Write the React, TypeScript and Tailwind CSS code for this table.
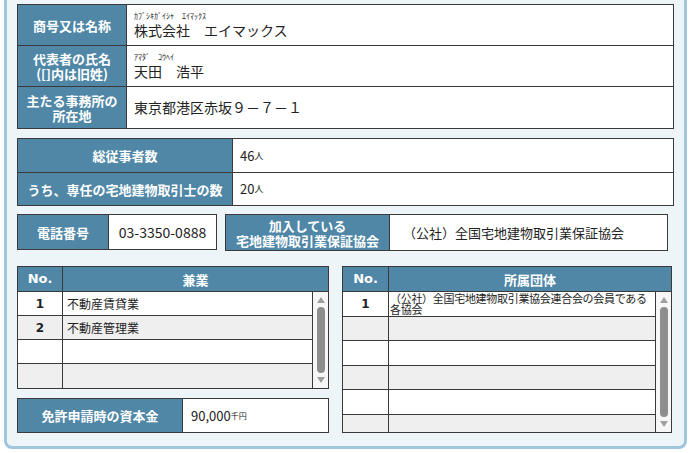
const jp = { fontFamily: '"Noto Sans CJK JP", "Noto Sans", sans-serif' };
const vd = { fontFamily: '"DejaVu Sans", "Noto Sans CJK JP", sans-serif' };

function Scrollbar() {
  return (
    <div className="flex w-[15px] shrink-0 flex-col items-center bg-[#f7f7f7] py-[5px]">
      <div className="h-0 w-0 border-x-[4px] border-b-[6px] border-x-transparent border-b-[#a0a0a0]" />
      <div className="my-[4px] w-[8px] flex-1 rounded-full bg-[#8e8e8e]" />
      <div className="h-0 w-0 border-x-[4px] border-t-[6px] border-x-transparent border-t-[#a0a0a0]" />
    </div>
  );
}

function Label({ children, className = '' }: { children: React.ReactNode; className?: string }) {
  return (
    <div
      className={`flex shrink-0 flex-col items-center justify-center bg-[#5087a7] text-center text-[13px] font-bold leading-[15px] text-white ${className}`}
      style={jp}
    >
      {children}
    </div>
  );
}

export default function App() {
  const sideJobs = ['不動産賃貸業', '不動産管理業', '', ''];
  const groups: string[][] = [['（公社）全国宅地建物取引業協会連合会の会員である', '各協会'], [], [], [], [], []];

  return (
    <div className="h-[453px] w-[690px] overflow-hidden bg-white" style={jp}>
      <div className="ml-[4px] h-[449px] w-[683px] rounded-b-[8px] border-x-[3px] border-b-[3px] border-[#9fc6dd] bg-[#eef5f8] px-[10px] pt-[4px] text-[#222]">
        {/* 商号 */}
        <div className="flex w-[657px] flex-col border border-[#3a3a3a] bg-white">
          <div className="flex h-[41px] border-b border-[#3a3a3a]">
            <Label className="w-[109px] border-r border-[#3a3a3a]">商号又は名称</Label>
            <div className="flex flex-col justify-center pl-[7px]">
              <span className="text-[8px] leading-[10px]">ｶﾌﾞｼｷｶﾞｲｼｬ　ｴｲﾏｯｸｽ</span>
              <span className="text-[14px] leading-[18px]">株式会社　エイマックス</span>
            </div>
          </div>
          <div className="flex h-[41px] border-b border-[#3a3a3a]">
            <Label className="w-[109px] border-r border-[#3a3a3a]">
              <span>代表者の氏名</span>
              <span>([]内は旧姓)</span>
            </Label>
            <div className="flex flex-col justify-center pl-[7px]">
              <span className="text-[8px] leading-[10px]">ｱﾏﾀﾞ　ｺｳﾍｲ</span>
              <span className="text-[14px] leading-[18px]">天田　浩平</span>
            </div>
          </div>
          <div className="flex h-[41px]">
            <Label className="w-[109px] border-r border-[#3a3a3a]">
              <span>主たる事務所の</span>
              <span>所在地</span>
            </Label>
            <div className="flex items-center pl-[7px] text-[14px]">東京都港区赤坂９－７－１</div>
          </div>
        </div>

        {/* 従事者数 */}
        <div className="mt-[9px] flex w-[657px] flex-col border border-[#3a3a3a] bg-white">
          <div className="flex h-[34px] border-b border-[#3a3a3a]">
            <Label className="w-[215px] border-r border-[#3a3a3a]">総従事者数</Label>
            <div className="flex items-center pl-[7px] text-[13px]">
              46<span className="text-[9px]">人</span>
            </div>
          </div>
          <div className="flex h-[32px]">
            <Label className="w-[215px] border-r border-[#3a3a3a]">うち、専任の宅地建物取引士の数</Label>
            <div className="flex items-center pl-[7px] text-[13px]">
              20<span className="text-[9px]">人</span>
            </div>
          </div>
        </div>

        {/* 電話・保証協会 */}
        <div className="mt-[8px] flex items-start gap-[8px]">
          <div className="flex h-[36px] w-[200px] border border-[#3a3a3a] bg-white">
            <Label className="w-[91px] border-r border-[#3a3a3a]">電話番号</Label>
            <div className="flex flex-1 items-center justify-center text-[14px]">03-3350-0888</div>
          </div>
          <div className="flex h-[37px] w-[443px] border border-[#3a3a3a] bg-white">
            <Label className="w-[164px] border-r border-[#3a3a3a]">
              <span>加入している</span>
              <span>宅地建物取引業保証協会</span>
            </Label>
            <div className="flex flex-1 items-center pl-[13px] text-[13px]">（公社）全国宅地建物取引業保証協会</div>
          </div>
        </div>

        {/* 兼業・所属団体 */}
        <div className="mt-[15px] flex gap-[13px]">
          <div className="flex w-[312px] flex-col">
            <div className="flex flex-col border border-[#3a3a3a] bg-white">
              <div className="flex h-[25px] border-b border-[#3a3a3a]">
                <div className="flex w-[45px] items-center justify-center border-r border-[#3a3a3a] bg-[#5087a7] text-[13px] font-bold text-white" style={vd}>
                  No.
                </div>
                <Label className="flex-1">兼業</Label>
              </div>
              <div className="flex">
                <div className="flex flex-1 flex-col">
                  {sideJobs.map((job, i) => (
                    <div
                      key={i}
                      className={`flex h-[24px] ${i < sideJobs.length - 1 ? 'border-b border-[#3a3a3a]' : ''} ${i % 2 ? 'bg-[#efefef]' : 'bg-white'}`}
                    >
                      <div className="flex w-[45px] items-center justify-center border-r border-[#3a3a3a] text-[12px] font-bold" style={vd}>
                        {job ? i + 1 : ''}
                      </div>
                      <div className="flex flex-1 items-center border-r border-[#3a3a3a] pl-[4px] text-[12px]">{job}</div>
                    </div>
                  ))}
                </div>
                <Scrollbar />
              </div>
            </div>
            <div className="mt-[9px] flex h-[35px] border border-[#3a3a3a] bg-white">
              <Label className="w-[165px] border-r border-[#3a3a3a]">免許申請時の資本金</Label>
              <div className="flex items-center pl-[8px] text-[13px]">
                90,000<span className="text-[8px]">千円</span>
              </div>
            </div>
          </div>

          <div className="flex w-[330px] flex-col self-start border border-[#3a3a3a] bg-white">
            <div className="flex h-[25px] border-b border-[#3a3a3a]">
              <div className="flex w-[46px] items-center justify-center border-r border-[#3a3a3a] bg-[#5087a7] text-[13px] font-bold text-white" style={vd}>
                No.
              </div>
              <Label className="flex-1">所属団体</Label>
            </div>
            <div className="flex h-[140px] overflow-hidden">
              <div className="flex flex-1 flex-col">
                {groups.map((g, i) => (
                  <div
                    key={i}
                    className={`flex h-[24.5px] shrink-0 border-b border-[#3a3a3a] ${i % 2 ? 'bg-[#efefef]' : 'bg-white'}`}
                  >
                    <div className="flex w-[46px] items-center justify-center border-r border-[#3a3a3a] text-[12px] font-bold" style={vd}>
                      {g.length ? i + 1 : ''}
                    </div>
                    <div className="flex flex-1 flex-col overflow-hidden whitespace-nowrap border-r border-[#3a3a3a] px-[1px] pt-[1px] text-[11px] leading-[11px] tracking-[-0.3px]">
                      {g.map((line) => (
                        <span key={line}>{line}</span>
                      ))}
                    </div>
                  </div>
                ))}
              </div>
              <Scrollbar />
            </div>
          </div>
        </div>
      </div>
    </div>
  );
}
